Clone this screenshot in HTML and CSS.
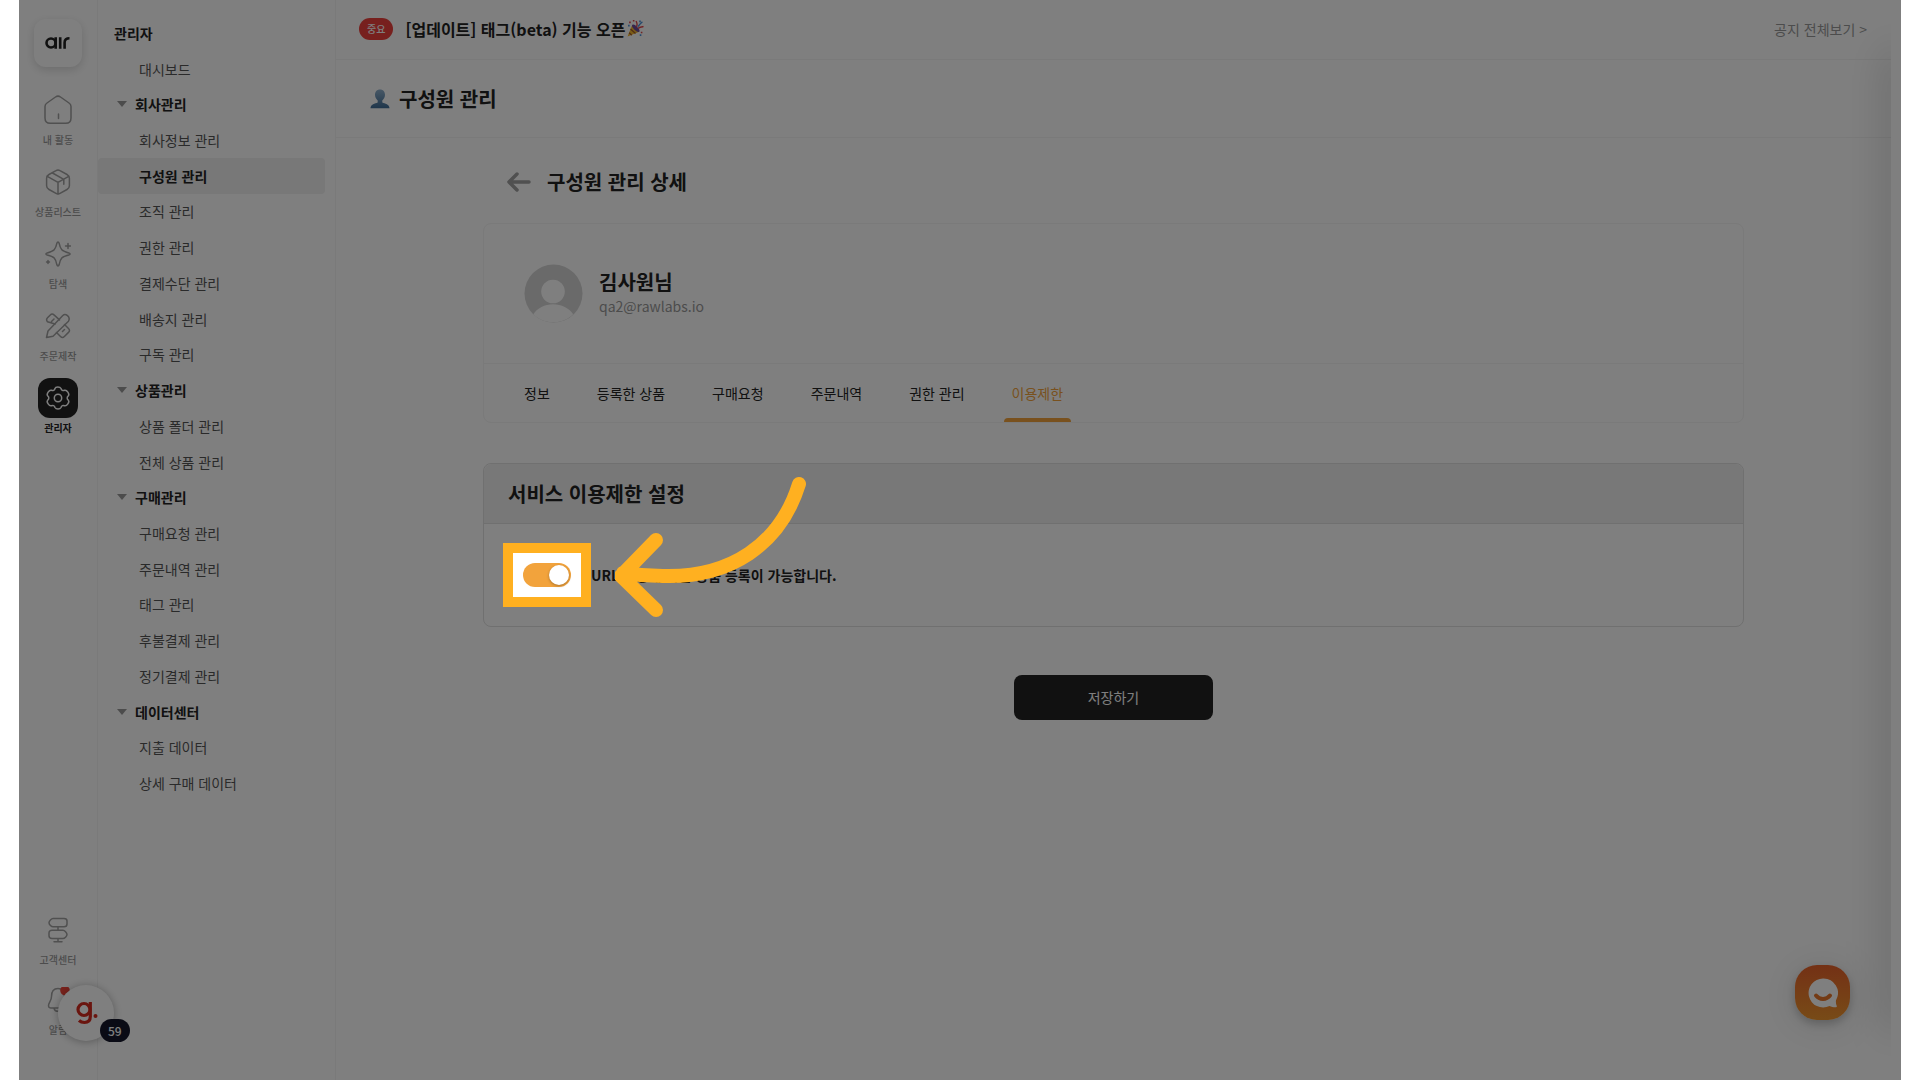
FILE: index.html
```html
<!DOCTYPE html>
<html lang="ko">
<head>
    <meta charset="UTF-8">
    <meta name="viewport" content="width=device-width, initial-scale=1.0">
    <title>구성원 관리</title>
    <link rel="stylesheet" href="styles.css">
</head>
<body>
    <div class="app">
        <nav class="rail">
            <a href="#" class="logo" aria-label="air">
                <svg width="26" height="14" viewBox="0 0 26 14" fill="none" stroke="#222" stroke-width="2.6">
                    <circle cx="6" cy="7" r="4.5"/>
                    <path d="M10.7 1.2v11.6M15.2 1.2v11.6M19.6 12.8V6.5c0-2.8 1.7-4.2 4.9-4.2"/>
                </svg>
            </a>
            <a href="#" class="rail-item">
                <span class="rail-icon">
                    <svg width="30" height="30" viewBox="0 0 30 30">
                        <path d="M2 11.5c0-1.6.7-2.6 2-3.5l8.500-6c1.700-1.200 3.300-1.200 5 0l8.500 6c1.300.9 2 1.900 2 3.500V23c0 3.500-1.800 5.300-5.300 5.300H7.300C3.800 28.300 2 26.500 2 23z"/>
                        <path d="M15.500 19v4.500"/>
                    </svg>
                </span>
                내 활동
            </a>
            <a href="#" class="rail-item">
                <span class="rail-icon">
                    <svg width="26" height="26" viewBox="0 0 26 26">
                        <path d="M11 1.700c1.300-.8 2.700-.8 4 0l7 3.800c1.600.9 2.400 2 2.400 3.700v7.600c0 1.700-.8 2.800-2.400 3.700l-7 3.800c-1.300.8-2.700.8-4 0l-7-3.800c-1.600-.9-2.400-2-2.400-3.700V9.200c0-1.700.8-2.800 2.400-3.700z"/>
                        <path d="M2.300 7.300L13 13.300l10.700-6M13 13.300v11.400M7.500 4l11.300 6.300v5"/>
                    </svg>
                </span>
                상품리스트
            </a>
            <a href="#" class="rail-item">
                <span class="rail-icon">
                    <svg width="26" height="26" viewBox="0 0 26 26">
                        <path d="M13 1c.6 0 .9.400 1.100 1.200 1.300 6.300 2.700 8 9.700 9.700 1.700.5 1.700 1.700 0 2.200-7 1.500-8.400 3.200-9.700 9.700-.4 1.600-1.800 1.600-2.200 0-1.300-6.500-2.700-8.200-9.700-9.700-1.700-.5-1.700-1.700 0-2.200 7-1.700 8.400-3.400 9.700-9.700.2-.8.500-1.200 1.100-1.200z"/>
                        <path d="M23 2.500v5M20.500 5h5M3 19.500v3M1.500 21h3"/>
                    </svg>
                </span>
                탐색
            </a>
            <a href="#" class="rail-item">
                <span class="rail-icon">
                    <svg width="26" height="26" viewBox="0 0 26 26">
                        <path d="M17.800 2.500c2.500-2.500 8.200 1 5.700 5.700L8 23.200l-6.500 1.300L3 18z"/>
                        <path d="M10 11L2.500 8.700C1.300 7.300 1.300 6 2.500 4.800l2.800-2.900c1.200-1.200 2.500-1.200 3.700 0l5.500 5M6.500 8.500l2.500-2.500M11.500 19.500l4 4c1.300 1.300 2.600 1.300 3.900 0l4.100-4.100c1.300-1.300 1.300-2.600 0-3.900l-4-4M17.500 18.500l2-2"/>
                    </svg>
                </span>
                주문제작
            </a>
            <a href="#" class="rail-item active">
                <span class="rail-icon">
                    <svg width="26" height="26" viewBox="0 0 26 26">
                        <path d="M10 3.500C10.500 1.500 15 1.500 16 3.500c.5 2 2 2.500 3.500 1.800 2.200-.8 5.500 3.900 3.800 5.500-1.500 1.200-1.500 3.200 0 4.400 1.700 1.600-1.600 6.300-3.800 5.500-1.500-.7-3-.2-3.500 1.800-1 2-5 2-6 0-.5-2-2-2.500-3.500-1.800-2.200.8-5.500-3.900-3.800-5.500 1.500-1.200 1.500-3.200 0-4.400C1 9.200 4.300 4.500 6.500 5.300 8 6 9.500 5.500 10 3.500z"/>
                        <circle cx="13" cy="13" r="3.700"/>
                    </svg>
                </span>
                관리자
            </a>
            <div class="rail-bottom">
                <a href="#" class="rail-item">
                    <span class="rail-icon">
                        <svg width="22" height="26" viewBox="0 0 22 26">
                            <path d="M6 1.500h11c2 0 3 1 3 2.500v3c0 1.800-1 2.800-3 2.800H6C4.500 9.800 2 7.500 2 5.700s2.500-4.200 4-4.200zM5 13.300h11c1.500 0 4 2.400 4 4.200s-2.500 4-4 4H5c-2 0-3-1-3-2.700v-2.700c0-1.800 1-2.800 3-2.800zM11 9.800v3.500M11 21.500v3.300M7 24.800h8"/>
                        </svg>
                    </span>
                    고객센터
                </a>
                <a href="#" class="rail-item">
                    <span class="rail-icon">
                        <svg width="24" height="26" viewBox="0 0 24 26">
                            <path d="M12 1.500c-4.500 0-6.500 3.500-6.500 8 0 5-3.300 6.300-3 9.500.2 1.500 1 2 2.500 2h14c1.500 0 2.300-.5 2.500-2 .3-3.200-3-4.500-3-9.500 0-4.500-2-8-6.500-8zM8 21.300c.8 4 7.200 4 8 0"/>
                            <circle class="dot" cx="19" cy="3.500" r="4.800"/>
                        </svg>
                    </span>
                    알림
                </a>
            </div>
        </nav>

        <aside class="menu">
            <ul>
                <li class="menu-title">관리자</li>
                <li><a href="#">대시보드</a></li>
                <li class="group">회사관리</li>
                <li><a href="#">회사정보 관리</a></li>
                <li><a href="#" class="selected">구성원 관리</a></li>
                <li><a href="#">조직 관리</a></li>
                <li><a href="#">권한 관리</a></li>
                <li><a href="#">결제수단 관리</a></li>
                <li><a href="#">배송지 관리</a></li>
                <li><a href="#">구독 관리</a></li>
                <li class="group">상품관리</li>
                <li><a href="#">상품 폴더 관리</a></li>
                <li><a href="#">전체 상품 관리</a></li>
                <li class="group">구매관리</li>
                <li><a href="#">구매요청 관리</a></li>
                <li><a href="#">주문내역 관리</a></li>
                <li><a href="#">태그 관리</a></li>
                <li><a href="#">후불결제 관리</a></li>
                <li><a href="#">정기결제 관리</a></li>
                <li class="group">데이터센터</li>
                <li><a href="#">지출 데이터</a></li>
                <li><a href="#">상세 구매 데이터</a></li>
            </ul>
        </aside>

        <main class="main">
            <div class="notice">
                <span class="badge">중요</span>
                <a href="#" class="notice-title">[업데이트] 태그(beta) 기능 오픈
                    <svg width="17" height="17" viewBox="0 0 16 16">
                        <path d="M0.500 15.500L5 4.500l6.500 6.500z" fill="#f5b82e"/>
                        <path d="M3.300 8.500l4.700 4.200M2 12l2.500 2.300" stroke="#a35b2a" stroke-width="1.200"/>
                        <ellipse cx="8.300" cy="7.800" rx="4.600" ry="1.800" transform="rotate(45 8.300 7.800)" fill="#6d4a9c"/>
                        <path d="M8.500 6.500C10.500 5 9.500 3 8.500 1M10.500 8c1.500-2 3.500-1 5-2" stroke="#e0484d" stroke-width="1.300" fill="none"/>
                        <path d="M10 6.200c2-1 2-3 4.500-4.500" stroke="#4a90d9" stroke-width="1.300" fill="none"/>
                        <path d="M2 1.500h1.500V3H2zM5.500 0H7v1.500H5.500zM13 11h1.500v1.500H13z" fill="#e0484d"/>
                        <path d="M11.500.5H13V2h-1.500zM1 4.500h1.500V6H1zM12 13.500h1.500V15H12z" fill="#4a90d9"/>
                    </svg>
                </a>
                <a href="#" class="notice-all">공지 전체보기 &gt;</a>
            </div>

            <header class="page-header">
                <svg width="20" height="20" viewBox="0 0 20 20">
                    <defs>
                        <linearGradient id="person" x1="0" y1="0" x2="0" y2="1">
                            <stop offset="0" stop-color="#8fb0cc"/>
                            <stop offset="1" stop-color="#3f6c96"/>
                        </linearGradient>
                    </defs>
                    <path d="M10 .5c-3.200 0-5 2.200-5 5.300 0 2.700 1.200 4.400 2.700 5.600v2C5 14.700.5 15 .5 19.300h19C19.500 15 15 14.700 12.300 13.400v-2C13.800 10.200 15 8.500 15 5.800 15 2.700 13.200.5 10 .5z" fill="url(#person)"/>
                </svg>
                <h1>구성원 관리</h1>
            </header>

            <div class="content">
                <div class="detail-title">
                    <button type="button" class="back-button" aria-label="뒤로">
                        <svg width="24" height="20" viewBox="0 0 24 20" fill="none" stroke="#a0a0a0" stroke-width="3.500" stroke-linecap="round" stroke-linejoin="round">
                            <path d="M10 2L2 10l8 8M2.500 10H22"/>
                        </svg>
                    </button>
                    <h2>구성원 관리 상세</h2>
                </div>

                <section class="card profile-card">
                    <div class="profile">
                        <svg width="59" height="59" viewBox="0 0 60 60">
                            <circle cx="30" cy="30" r="29.500" fill="#d4d4d4"/>
                            <circle cx="29.500" cy="28" r="12" fill="#fff"/>
                            <path d="M9.500 51c4-6 11.500-10 20-10s16.500 4 20.500 10c-11 11-29.500 11-40.500 0z" fill="#fff"/>
                        </svg>
                        <div>
                            <h3>김사원님</h3>
                            <p>qa2@rawlabs.io</p>
                        </div>
                    </div>
                    <div class="tabs">
                        <a href="#">정보</a>
                        <a href="#">등록한 상품</a>
                        <a href="#">구매요청</a>
                        <a href="#">주문내역</a>
                        <a href="#">권한 관리</a>
                        <a href="#" class="on">이용제한</a>
                    </div>
                </section>

                <section class="card limit-card">
                    <h3>서비스 이용제한 설정</h3>
                    <div class="limit-row">
                        <div class="switch-wrap">
                            <input type="checkbox" class="switch" id="urlLimit" checked>
                            <span class="spotlight"></span>
                            <svg class="arrow" width="200" height="150" viewBox="0 0 200 150">
                                <path d="M184 14C165 75 115 108 48 106Q28 106 8 103M41 70L6 106l35 34"/>
                            </svg>
                        </div>
                        <label for="urlLimit">URL을 통해 직접 상품 등록이 가능합니다.</label>
                    </div>
                </section>

                <button type="button" class="save-button">저장하기</button>
            </div>
        </main>

        <div class="side-panel"></div>

        <div class="guide">
            <svg width="24" height="26" viewBox="0 0 24 26" fill="none" stroke="#d52b1e" stroke-width="3.200" aria-hidden="true">
                <circle cx="10" cy="9.500" r="6"/>
                <path d="M16.300 2v14.500c0 4.300-2.500 6-5.800 6-2.300 0-4-.6-5.500-2"/>
                <circle cx="21.500" cy="16" r="2" fill="#d52b1e" stroke="none"/>
            </svg>
            <span class="guide-count">59</span>
        </div>

        <button type="button" class="chat" aria-label="채팅 상담">
            <svg width="30" height="30" viewBox="0 0 30 30">
                <path d="M15 .5a14.500 14.500 0 1 0 6.500 27.500c2 .9 4.500 1.500 6.500 1.300.8-.1 1-.8.7-1.500-.7-1.600-1-3.800-.7-5.600A14.500 14.500 0 0 0 15 .5z" fill="#fff"/>
                <path d="M8 17.500c3.500 4.500 10.500 4.500 14 0" fill="none" stroke="#e8762b" stroke-width="4" stroke-linecap="round"/>
            </svg>
        </button>
    </div>
</body>
</html>
```

FILE: styles.css
```css
* {
    box-sizing: border-box;
}

body {
    margin: 0;
    padding: 0 19px;
    background: #fff;
    color: #222;
    font-family: 'Noto Sans CJK KR', sans-serif;
    font-size: 14px;
    line-height: 20px;
}

a {
    color: inherit;
    text-decoration: none;
}

h1, h2, h3, p, ul {
    margin: 0;
    padding: 0;
}

h1, h2, h3 {
    font-size: 20px;
    line-height: 28px;
    font-weight: 700;
}

button {
    font-family: inherit;
    border: none;
    cursor: pointer;
}

svg {
    display: block;
    flex-shrink: 0;
}

/* overflow keeps the spotlight's shade inside the app */
.app {
    position: relative;
    display: flex;
    min-height: 100vh;
    overflow: hidden;
    background: #fff;
}

/* icon rail */
.rail {
    display: flex;
    flex-direction: column;
    align-items: center;
    width: 79px;
    padding: 19px 0 40px;
    border-right: 1px solid #f4f4f4;
}

.logo {
    display: flex;
    align-items: center;
    justify-content: center;
    width: 48px;
    height: 48px;
    margin-bottom: 23px;
    border-radius: 12px;
    box-shadow: 0 3px 10px rgba(0, 0, 0, 0.15);
}

.rail-item {
    display: flex;
    flex-direction: column;
    align-items: center;
    gap: 3px;
    height: 72px;
    color: #999;
    font-size: 10px;
    line-height: 14px;
    font-weight: 500;
}

.rail-icon {
    display: flex;
    align-items: center;
    justify-content: center;
    width: 40px;
    height: 40px;
    border-radius: 12px;
}

.rail-icon svg {
    fill: none;
    stroke: #a0a0a0;
    stroke-width: 1.5;
    stroke-linecap: round;
    stroke-linejoin: round;
}

.rail-icon .dot {
    fill: #f04438;
    stroke: none;
}

.rail-item.active {
    color: #222;
    font-weight: 700;
}

.rail-item.active .rail-icon {
    background: #222;
}

.rail-item.active svg {
    stroke: #fff;
}

.rail-bottom {
    margin-top: auto;
}

.rail-bottom .rail-item {
    height: 70px;
}

.rail-bottom .rail-item:last-child {
    height: 60px;
}

/* menu */
.menu {
    width: 238px;
    padding-top: 15px;
    border-right: 1px solid #f4f4f4;
}

.menu ul {
    display: grid;
    grid-auto-rows: 1fr;
    min-height: 786px;
    list-style: none;
}

.menu li {
    display: flex;
    align-items: center;
    color: #555;
}

.menu li a {
    display: flex;
    align-items: center;
    align-self: stretch;
    flex: 1;
    margin-right: 10px;
    padding-left: 41px;
    border-radius: 4px;
}

.menu .menu-title {
    padding-left: 16px;
    color: #222;
    font-weight: 700;
}

.menu .group {
    gap: 8px;
    padding-left: 19px;
    color: #222;
    font-weight: 700;
}

.group::before {
    content: "";
    border: 5px solid transparent;
    border-top: 6px solid #999;
    border-bottom: none;
}

.menu li .selected {
    background: #f0f0f0;
    color: #222;
    font-weight: 700;
}

/* main */
.main {
    flex: 1;
    margin-right: 10px;
}

.notice {
    display: flex;
    align-items: center;
    height: 60px;
    padding: 0 24px 2px 23px;
    border-bottom: 1px solid #f4f4f4;
}

.badge {
    margin-right: 12px;
    padding: 0 8px;
    border-radius: 11px;
    background: #ee403c;
    color: #fff;
    font-size: 10px;
    line-height: 22px;
    font-weight: 500;
}

.notice-title {
    display: flex;
    align-items: center;
    gap: 2px;
    font-size: 16px;
    font-weight: 700;
}

.notice-all {
    margin-left: auto;
    color: #999;
}

.page-header {
    display: flex;
    align-items: center;
    gap: 9px;
    height: 78px;
    padding: 1px 34px 0;
    border-bottom: 1px solid #f4f4f4;
}

.content {
    display: flex;
    flex-direction: column;
    max-width: 1261px;
    margin: 0 auto;
    padding-top: 30px;
}

.detail-title {
    display: flex;
    align-items: center;
    gap: 16px;
    margin-bottom: 27px;
    padding-left: 24px;
}

.back-button {
    padding: 0;
    background: none;
}

.card {
    margin-bottom: 40px;
    border: 1px solid #f4f4f4;
    border-radius: 8px;
}

.profile {
    display: flex;
    align-items: center;
    gap: 16px;
    padding: 40px;
    border-bottom: 1px solid #f4f4f4;
}

.profile p {
    margin-bottom: 4px;
    color: #999;
}

.tabs {
    display: flex;
    gap: 31px;
    padding: 0 32px;
}

.tabs a {
    padding: 19px 8px 15px;
    border-bottom: 4px solid transparent;
}

.tabs .on {
    color: #f2a33c;
    position: relative;
}

.tabs .on::after {
    content: "";
    position: absolute;
    left: 0;
    right: 0;
    bottom: -4px;
    height: 4px;
    border-radius: 4px 4px 0 0;
    background: #f2a33c;
}

.limit-card {
    margin-bottom: 48px;
    border-color: #e0e0e0;
}

.limit-card h3 {
    padding: 16px 24px 15px;
    border-bottom: 1px solid #e0e0e0;
    border-radius: 8px 8px 0 0;
    background: #f0f0f0;
}

.limit-row {
    display: flex;
    align-items: center;
    gap: 20px;
    padding: 39px;
    font-weight: 700;
}

.switch-wrap {
    position: relative;
    height: 24px;
}

.switch {
    appearance: none;
    display: block;
    width: 48px;
    height: 24px;
    margin: 0;
    padding: 2px;
    border-radius: 12px;
    background: #ccc;
    cursor: pointer;
}

.switch::before {
    content: "";
    display: block;
    width: 20px;
    height: 20px;
    border-radius: 50%;
    background: #fff;
    box-shadow: 0 1px 3px rgba(0, 0, 0, 0.3);
}

.switch:checked {
    background: #f2a33c;
}

.switch:checked::before {
    margin-left: 24px;
}

/* everything outside the box is shaded */
.spotlight {
    position: absolute;
    inset: -20px;
    z-index: 10;
    border: 10px solid #ffb020;
    box-shadow: 0 0 0 3000px rgba(0, 0, 0, 0.5);
    pointer-events: none;
}

.arrow {
    position: absolute;
    left: 92px;
    top: -93px;
    z-index: 11;
    fill: none;
    stroke: #ffb020;
    stroke-width: 14;
    stroke-linecap: round;
    stroke-linejoin: round;
    pointer-events: none;
}

.save-button {
    align-self: center;
    width: 199px;
    padding: 12px 0;
    border-radius: 8px;
    background: #222;
    color: #fff;
    font-size: 14px;
    line-height: 21px;
}

/* floating parts */
.side-panel {
    position: absolute;
    top: 50px;
    right: 0;
    bottom: 50px;
    width: 10px;
    box-shadow: 0 0 40px rgba(0, 0, 0, 0.4);
}

.side-panel::after {
    content: "";
    position: absolute;
    inset: -50px 0;
    background: #fff;
}

.guide {
    position: absolute;
    left: 39px;
    bottom: 39px;
    display: flex;
    align-items: center;
    justify-content: center;
    width: 56px;
    height: 56px;
    border-radius: 50%;
    background: #fff;
    box-shadow: 0 1px 8px rgba(0, 0, 0, 0.3);
}

.guide-count {
    position: absolute;
    left: 42px;
    top: 34px;
    padding: 0 8px;
    border-radius: 12px;
    background: #14172b;
    color: #fff;
    font-size: 12px;
    line-height: 23px;
    font-weight: 500;
}

.chat {
    position: absolute;
    right: 51px;
    bottom: 60px;
    display: flex;
    align-items: center;
    justify-content: center;
    width: 55px;
    height: 55px;
    padding: 0;
    border-radius: 22px;
    background: linear-gradient(#e8622b, #f0962e);
    box-shadow: 0 4px 8px rgba(0, 0, 0, 0.2), 0 4px 40px rgba(0, 0, 0, 0.12);
}
```
